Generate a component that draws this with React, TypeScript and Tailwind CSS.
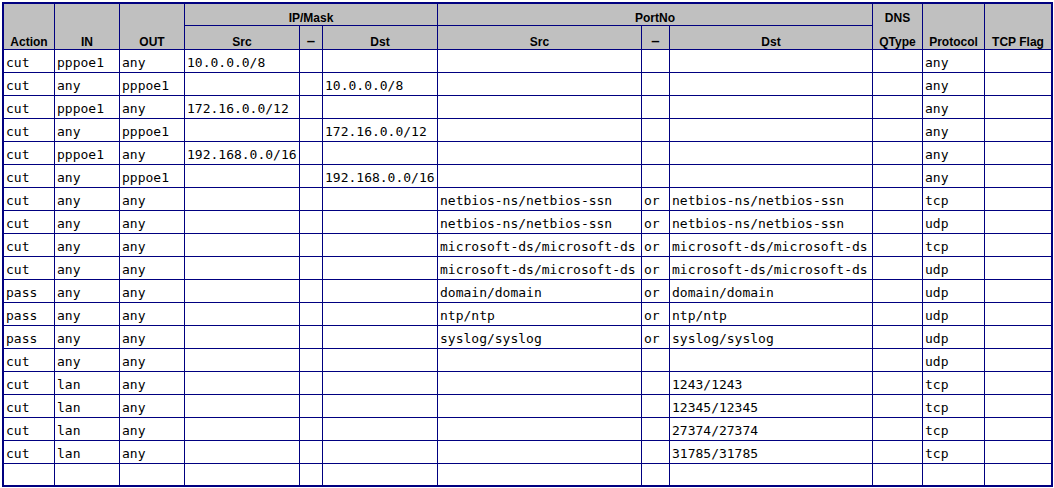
import React from 'react';

type Row = string[];

// Action, IN, OUT, IP src, -, IP dst, Port src, -, Port dst, DNS QType, Protocol, TCP Flag
const rows: Row[] = [
  ['cut', 'pppoe1', 'any', '10.0.0.0/8', '', '', '', '', '', '', 'any', ''],
  ['cut', 'any', 'pppoe1', '', '', '10.0.0.0/8', '', '', '', '', 'any', ''],
  ['cut', 'pppoe1', 'any', '172.16.0.0/12', '', '', '', '', '', '', 'any', ''],
  ['cut', 'any', 'pppoe1', '', '', '172.16.0.0/12', '', '', '', '', 'any', ''],
  ['cut', 'pppoe1', 'any', '192.168.0.0/16', '', '', '', '', '', '', 'any', ''],
  ['cut', 'any', 'pppoe1', '', '', '192.168.0.0/16', '', '', '', '', 'any', ''],
  ['cut', 'any', 'any', '', '', '', 'netbios-ns/netbios-ssn', 'or', 'netbios-ns/netbios-ssn', '', 'tcp', ''],
  ['cut', 'any', 'any', '', '', '', 'netbios-ns/netbios-ssn', 'or', 'netbios-ns/netbios-ssn', '', 'udp', ''],
  ['cut', 'any', 'any', '', '', '', 'microsoft-ds/microsoft-ds', 'or', 'microsoft-ds/microsoft-ds', '', 'tcp', ''],
  ['cut', 'any', 'any', '', '', '', 'microsoft-ds/microsoft-ds', 'or', 'microsoft-ds/microsoft-ds', '', 'udp', ''],
  ['pass', 'any', 'any', '', '', '', 'domain/domain', 'or', 'domain/domain', '', 'udp', ''],
  ['pass', 'any', 'any', '', '', '', 'ntp/ntp', 'or', 'ntp/ntp', '', 'udp', ''],
  ['pass', 'any', 'any', '', '', '', 'syslog/syslog', 'or', 'syslog/syslog', '', 'udp', ''],
  ['cut', 'any', 'any', '', '', '', '', '', '', '', 'udp', ''],
  ['cut', 'lan', 'any', '', '', '', '', '', '1243/1243', '', 'tcp', ''],
  ['cut', 'lan', 'any', '', '', '', '', '', '12345/12345', '', 'tcp', ''],
  ['cut', 'lan', 'any', '', '', '', '', '', '27374/27374', '', 'tcp', ''],
  ['cut', 'lan', 'any', '', '', '', '', '', '31785/31785', '', 'tcp', ''],
  ['', '', '', '', '', '', '', '', '', '', '', ''],
];

const head = 'flex items-end justify-center bg-[#c0c0c0] text-[12px] leading-[13px] font-bold text-black';

export default function App() {
  return (
    <div className="ml-[2px] mt-[2px] w-fit border-2 border-[#000080] bg-[#000080]">
      <div className="grid grid-cols-[50px_64px_64px_114px_22px_114px_203px_27px_202px_49px_61px_66px] grid-rows-[21px_23px_repeat(18,22px)_21px] gap-px font-['Liberation_Sans',Arial,sans-serif]">
        {/* header */}
        <div className={`${head} row-span-2`}>Action</div>
        <div className={`${head} row-span-2`}>IN</div>
        <div className={`${head} row-span-2`}>OUT</div>
        <div className={`${head} col-span-3`}>IP/Mask</div>
        <div className={`${head} col-span-3`}>PortNo</div>
        <div className="row-span-2 flex flex-col bg-[#c0c0c0] text-[12px] leading-[13px] font-bold text-black">
          <div className="flex h-[21px] items-end justify-center">DNS</div>
          <div className="flex h-[24px] items-end justify-center">QType</div>
        </div>
        <div className={`${head} row-span-2`}>Protocol</div>
        <div className={`${head} row-span-2`}>TCP Flag</div>
        <div className={head}>Src</div>
        <div className={`${head} pb-[2px] text-[15px]`}>–</div>
        <div className={head}>Dst</div>
        <div className={head}>Src</div>
        <div className={`${head} pb-[2px] text-[15px]`}>–</div>
        <div className={head}>Dst</div>

        {/* rows */}
        {rows.map((r, i) =>
          r.map((c, j) => (
            <div
              key={`${i}-${j}`}
              className="flex items-end overflow-hidden whitespace-nowrap bg-white pb-[1px] pl-[2px] font-['DejaVu_Sans_Mono',monospace] text-[13px] leading-[16px] text-black"
            >
              {c}
            </div>
          ))
        )}
      </div>
    </div>
  );
}
